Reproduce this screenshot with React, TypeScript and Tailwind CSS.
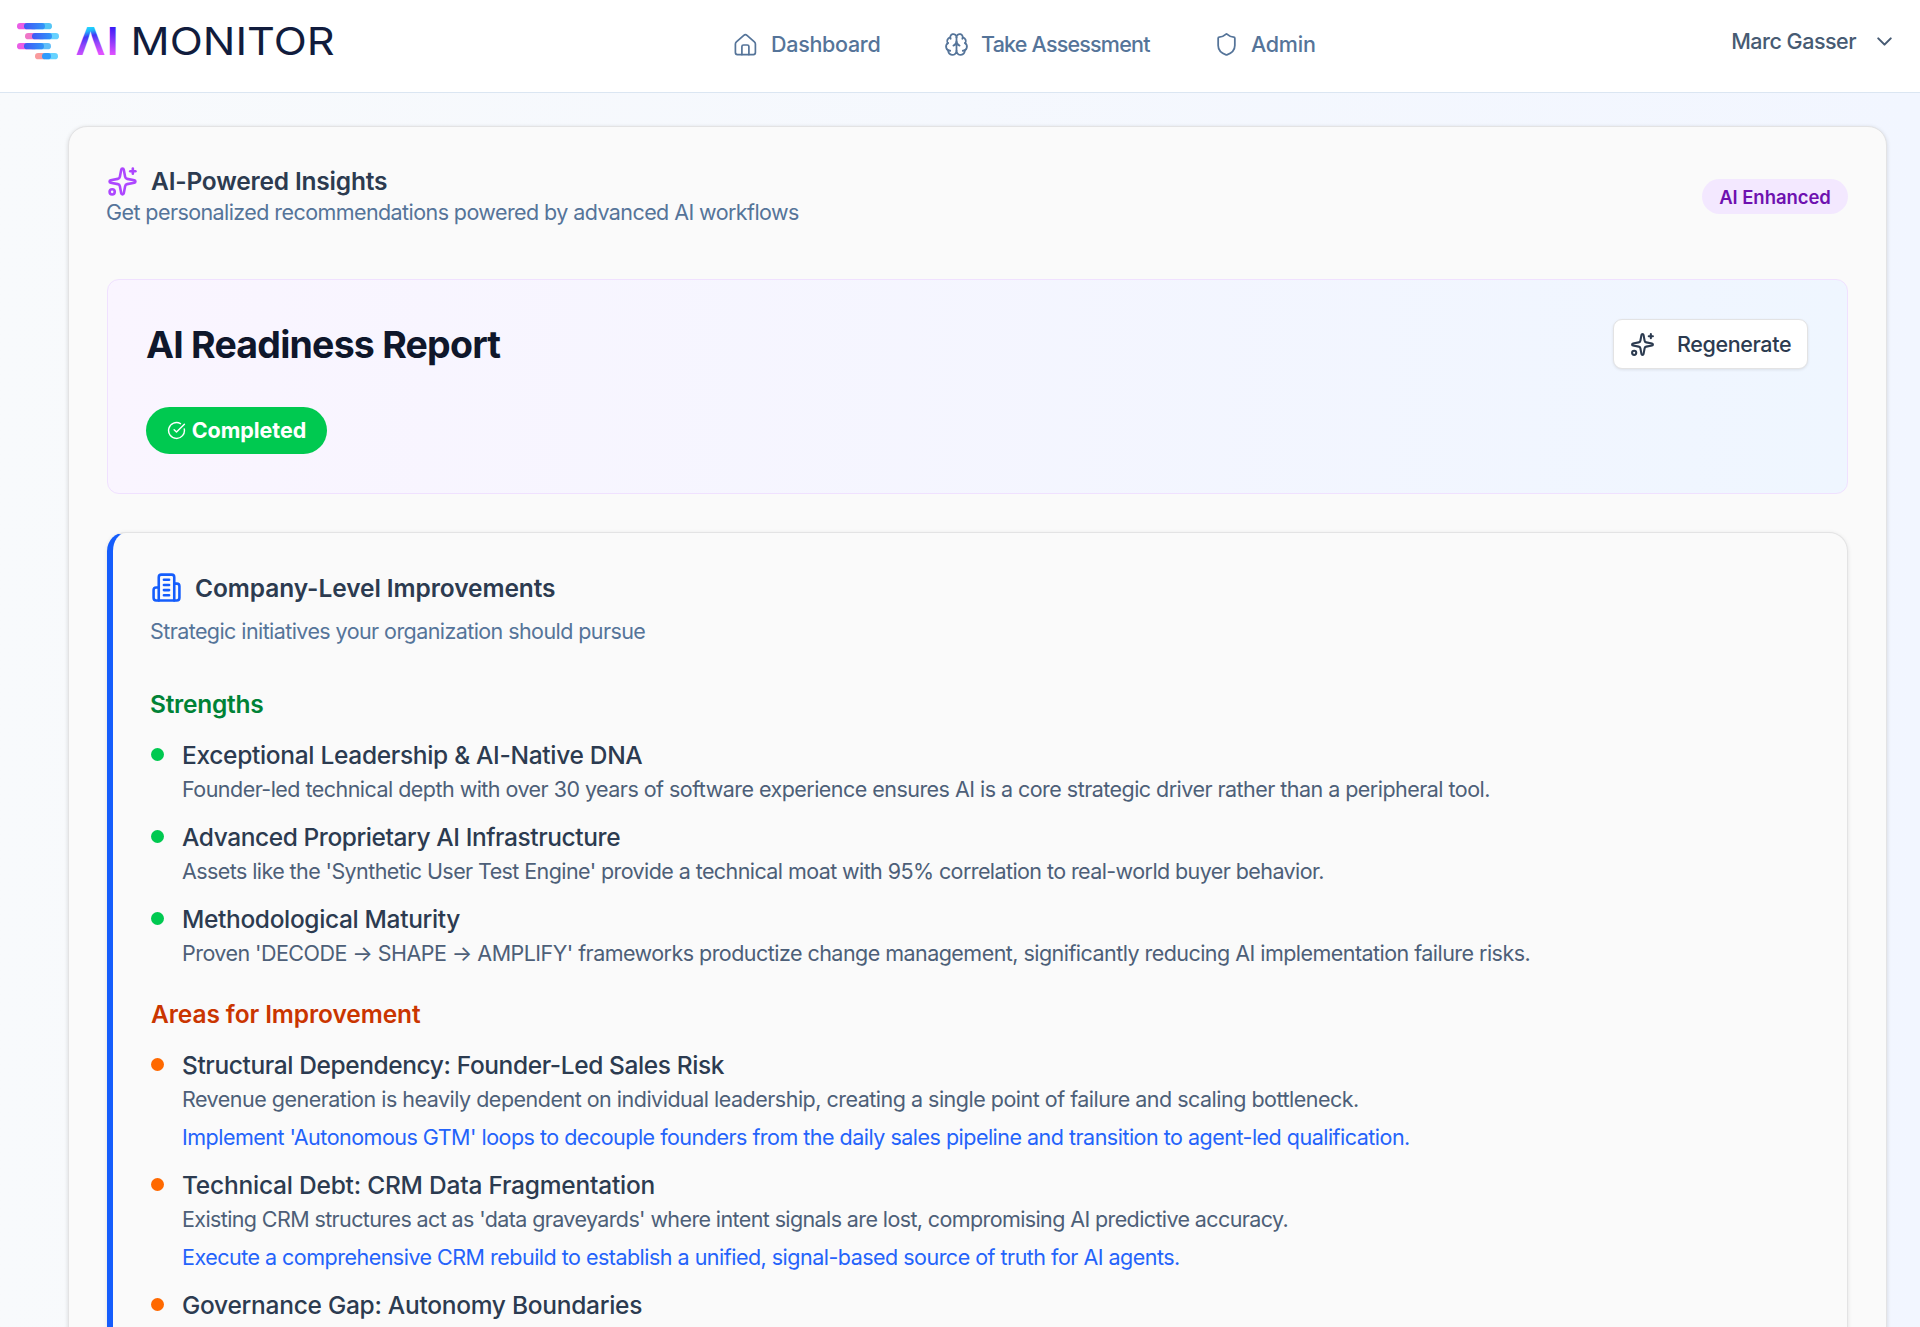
import type { ReactNode } from "react";
import { Brain, ChevronDown, CircleCheckBig, Shield, Sparkles } from "lucide-react";

type Item = { title: string; titleCls: string; text?: string; textCls?: string; action?: string; actionCls?: string };

const strengths: Item[] = [
  {
    title: "Exceptional Leadership & AI-Native DNA",
    titleCls: "tracking-[-0.316px]",
    text: "Founder-led technical depth with over 30 years of software experience ensures AI is a core strategic driver rather than a peripheral tool.",
    textCls: "tracking-[-0.537px]",
  },
  {
    title: "Advanced Proprietary AI Infrastructure",
    titleCls: "tracking-[-0.42px]",
    text: "Assets like the 'Synthetic User Test Engine' provide a technical moat with 95% correlation to real-world buyer behavior.",
    textCls: "tracking-[-0.587px]",
  },
  {
    title: "Methodological Maturity",
    titleCls: "tracking-[-0.355px]",
    text: "Proven 'DECODE → SHAPE → AMPLIFY' frameworks productize change management, significantly reducing AI implementation failure risks.",
    textCls: "tracking-[-0.54px]",
  },
];

const improvements: Item[] = [
  {
    title: "Structural Dependency: Founder-Led Sales Risk",
    titleCls: "tracking-[-0.4px]",
    text: "Revenue generation is heavily dependent on individual leadership, creating a single point of failure and scaling bottleneck.",
    textCls: "tracking-[-0.506px]",
    action:
      "Implement 'Autonomous GTM' loops to decouple founders from the daily sales pipeline and transition to agent-led qualification.",
    actionCls: "tracking-[-0.511px]",
  },
  {
    title: "Technical Debt: CRM Data Fragmentation",
    titleCls: "tracking-[-0.225px]",
    text: "Existing CRM structures act as 'data graveyards' where intent signals are lost, compromising AI predictive accuracy.",
    textCls: "tracking-[-0.613px]",
    action: "Execute a comprehensive CRM rebuild to establish a unified, signal-based source of truth for AI agents.",
    actionCls: "tracking-[-0.514px]",
  },
  {
    title: "Governance Gap: Autonomy Boundaries",
    titleCls: "tracking-[-0.274px]",
  },
];

function Logo() {
  return (
    <svg width="340" height="91" viewBox="0 0 340 91" role="img" aria-label="AI Monitor" className="shrink-0">
      <defs>
        <linearGradient id="bar" x1="0" x2="1" y1="0" y2="0">
          <stop offset="0" stopColor="#4257f6" />
          <stop offset="1" stopColor="#3197f8" />
        </linearGradient>
        <linearGradient id="lambda" gradientUnits="userSpaceOnUse" x1="86" y1="27" x2="93" y2="55">
          <stop offset="0" stopColor="#1fe0ff" />
          <stop offset="0.16" stopColor="#22b4fb" />
          <stop offset="0.34" stopColor="#4038f6" />
          <stop offset="0.6" stopColor="#8f45fa" />
          <stop offset="1" stopColor="#e251ff" />
        </linearGradient>
        <linearGradient id="stem" gradientUnits="userSpaceOnUse" x1="0" y1="27" x2="0" y2="55">
          <stop offset="0" stopColor="#3a1cf6" />
          <stop offset="0.5" stopColor="#8a38fa" />
          <stop offset="1" stopColor="#e251ff" />
        </linearGradient>
      </defs>
      <rect x="17" y="23" width="20" height="6.3" rx="3.15" fill="#e95ee6" />
      <rect x="30" y="23" width="22" height="6.3" rx="3.15" fill="#55c6f6" />
      <rect x="24" y="23" width="21" height="6.3" rx="3.15" fill="url(#bar)" />
      <rect x="25" y="33" width="20" height="6.3" rx="3.15" fill="#ef76c8" />
      <rect x="38" y="33" width="21" height="6.3" rx="3.15" fill="#66d1ff" />
      <rect x="32" y="33" width="20" height="6.3" rx="3.15" fill="url(#bar)" />
      <rect x="17" y="43" width="20" height="6.3" rx="3.15" fill="#e95ee6" />
      <rect x="30" y="43" width="21" height="6.3" rx="3.15" fill="#61bff9" />
      <rect x="24" y="43" width="20" height="6.3" rx="3.15" fill="url(#bar)" />
      <rect x="35" y="53" width="12" height="6.3" rx="3.15" fill="#f99b9d" />
      <rect x="44" y="53" width="14" height="6.3" rx="3.15" fill="#66d3ff" />
      <rect x="42" y="53" width="9" height="6.3" rx="3.15" fill="#2f9bfd" />
      <text x="75.5" y="55" fontFamily="Inter, sans-serif" fontSize="38.5" fontWeight="600" fill="url(#lambda)" textLength="30" lengthAdjust="spacingAndGlyphs">
        Λ
      </text>
      <text x="107.2" y="55" fontFamily="Inter, sans-serif" fontSize="38.5" fontWeight="700" fill="url(#stem)">
        I
      </text>
      <text x="130.6" y="54.5" fontFamily="Inter, sans-serif" fontSize="38.5" fontWeight="400" fill="#111c3d" textLength="204" lengthAdjust="spacingAndGlyphs">
        MONITOR
      </text>
    </svg>
  );
}

function HomeIcon() {
  return (
    <svg width="25" height="25" viewBox="0 0 25 25" fill="none" stroke="currentColor" strokeWidth="1.7" strokeLinecap="round" strokeLinejoin="round" className="-ml-px mr-px">
      <path d="M2.4 12.1a3 3 0 0 1 1-2.2l7.4-6.6a2.4 2.4 0 0 1 3.2 0l7.4 6.6a3 3 0 0 1 1 2.2V20.6a2 2 0 0 1-2 2H4.4a2 2 0 0 1-2-2Z" />
      <path d="M8.9 22.6v-8a1.6 1.6 0 0 1 1.6-1.6h3.8a1.6 1.6 0 0 1 1.6 1.6v8" />
    </svg>
  );
}

function BuildingIcon() {
  return (
    <svg width="31" height="31" viewBox="0 0 24 24" fill="none" stroke="currentColor" strokeWidth="2" strokeLinecap="round" strokeLinejoin="round" className="mb-px shrink-0 text-[#155dfc]">
      <path d="M6 22V4a2 2 0 0 1 2-2h8a2 2 0 0 1 2 2v18Z" />
      <path d="M6 12H4a2 2 0 0 0-2 2v6a2 2 0 0 0 2 2h2" />
      <path d="M18 9h2a2 2 0 0 1 2 2v9a2 2 0 0 1-2 2h-2" />
      <path d="M10 6h4M10 10h4M10 14h4M10 18h4" />
    </svg>
  );
}

function NavItem({ icon, children, className }: { icon: ReactNode; children: ReactNode; className: string }) {
  return (
    <a className={`flex items-center text-[21.5px] leading-8 font-medium text-[#557499] ${className}`}>
      {icon}
      <span>{children}</span>
    </a>
  );
}

function ItemRow({ item, dot }: { item: Item; dot: string }) {
  return (
    <li className="flex gap-[18px]">
      <span className={`mt-[11px] size-[13px] shrink-0 rounded-full ${dot}`} />
      <div>
        <p className={`text-[24.5px] leading-9 font-medium text-[#2c3b50] ${item.titleCls}`}>{item.title}</p>
        {item.text && <p className={`text-[21.5px] leading-8 text-[#4d5f78] ${item.textCls}`}>{item.text}</p>}
        {item.action && <p className={`mt-1.5 text-[21.5px] leading-8 text-[#2463fa] ${item.actionCls}`}>{item.action}</p>}
      </div>
    </li>
  );
}

export default function App() {
  return (
    <div className="h-[1327px] overflow-hidden bg-linear-to-r from-[#f8fafc] to-[#f2f6ff] font-['Inter',sans-serif] whitespace-nowrap">
      <header className="flex h-[93px] border-b border-[#dbe6f2] bg-white">
        <Logo />
        <nav className="ml-[394px] flex items-center pb-1">
          <NavItem className="w-[210px] gap-3 tracking-[-0.3px]" icon={<HomeIcon />}>
            Dashboard
          </NavItem>
          <NavItem className="w-[270px] gap-3 tracking-[-0.8px]" icon={<Brain size={25} strokeWidth={1.7} />}>
            Take Assessment
          </NavItem>
          <NavItem className="gap-3 tracking-[-0.25px]" icon={<Shield size={25} strokeWidth={1.7} />}>
            Admin
          </NavItem>
        </nav>
        <button className="mr-[23px] ml-auto flex items-center gap-4 pb-2.5 text-[21.5px] leading-8 font-medium tracking-[-0.5px] text-[#475b73]">
          Marc Gasser
          <ChevronDown size={25} strokeWidth={2} />
        </button>
      </header>

      <main className="pt-[33px] pr-[33px] pl-[68px]">
        <section className="h-[1400px] rounded-[19px] border border-[#e3e3e4] bg-[#fafafa] px-[38px] pt-[37px] shadow-[0_1px_4px_rgba(0,0,0,0.14)]">
          <div className="flex items-center justify-between">
            <div>
              <div className="flex h-[34px] items-center gap-[13px]">
                <Sparkles size={31} strokeWidth={2} className="shrink-0 text-[#ad46ff]" />
                <h2 className="text-[24.5px] leading-[34px] font-semibold tracking-[-0.19px] text-[#2c3b50]">AI-Powered Insights</h2>
              </div>
              <p className="-ml-px text-[21.5px] leading-7 tracking-[-0.58px] text-[#557499]">
                Get personalized recommendations powered by advanced AI workflows
              </p>
            </div>
            <span className="mt-[3px] flex h-[35px] w-[146px] items-center justify-center rounded-full bg-[#f3e8ff] pt-0.5 text-[18.5px] font-semibold tracking-[-0.05px] text-[#6e11b0]">
              AI Enhanced
            </span>
          </div>

          <div className="mt-[53px] h-[215px] rounded-[12px] border border-[#f0e1ff] bg-linear-to-r from-[#faf5ff] to-[#eff6ff] py-[39px] pr-[39px] pl-[38px]">
            <div className="flex h-[49px] items-center justify-between">
              <h1 className="mt-0.5 text-[37.5px] leading-[49px] font-bold tracking-[-0.79px] text-[#0f172b]">AI Readiness Report</h1>
              <button className="flex h-[50px] w-[195px] items-center gap-[22px] rounded-[9px] border border-[#e3e3e4] bg-white pt-px pl-4 text-[21.5px] font-medium tracking-[-0.38px] text-[#2c3b50] shadow-[0_1px_3px_rgba(0,0,0,0.09)]">
                <Sparkles size={25} strokeWidth={2} className="shrink-0" />
                Regenerate
              </button>
            </div>
            <span className="mt-[39px] flex h-[47px] w-[181px] items-center justify-center gap-1.5 rounded-full bg-[#00c950] text-[21.5px] font-bold tracking-[-0.05px] text-white">
              <CircleCheckBig size={19} strokeWidth={1.8} className="shrink-0" />
              Completed
            </span>
          </div>

          <div className="mt-[38px] h-[1000px] rounded-[19px] border border-l-[6px] border-[#e3e3e4] border-l-[#155dfc] bg-[#fafafa] pt-[38px] pl-[38px] shadow-[0_1px_4px_rgba(0,0,0,0.1)]">
            <div className="flex h-[33px] items-center gap-[13px]">
              <BuildingIcon />
              <h3 className="text-[24.5px] leading-8 font-semibold tracking-[-0.08px] text-[#2c3b50]">Company-Level Improvements</h3>
            </div>
            <p className="mt-[13px] -ml-px text-[21.5px] leading-7 tracking-[-0.58px] text-[#557499]">
              Strategic initiatives your organization should pursue
            </p>

            <h4 className="mt-[41px] -ml-px text-[24.5px] leading-9 font-semibold tracking-[-0.26px] text-[#008236]">Strengths</h4>
            <ul className="mt-[15px] flex flex-col gap-3.5">
              {strengths.map((item) => (
                <ItemRow key={item.title} item={item} dot="bg-[#00c950]" />
              ))}
            </ul>

            <h4 className="mt-[27px] text-[24.5px] leading-9 font-semibold tracking-[-0.1px] text-[#ca3500]">Areas for Improvement</h4>
            <ul className="mt-[15px] flex flex-col gap-3.5">
              {improvements.map((item) => (
                <ItemRow key={item.title} item={item} dot="bg-[#ff6900]" />
              ))}
            </ul>
          </div>
        </section>
      </main>
    </div>
  );
}
